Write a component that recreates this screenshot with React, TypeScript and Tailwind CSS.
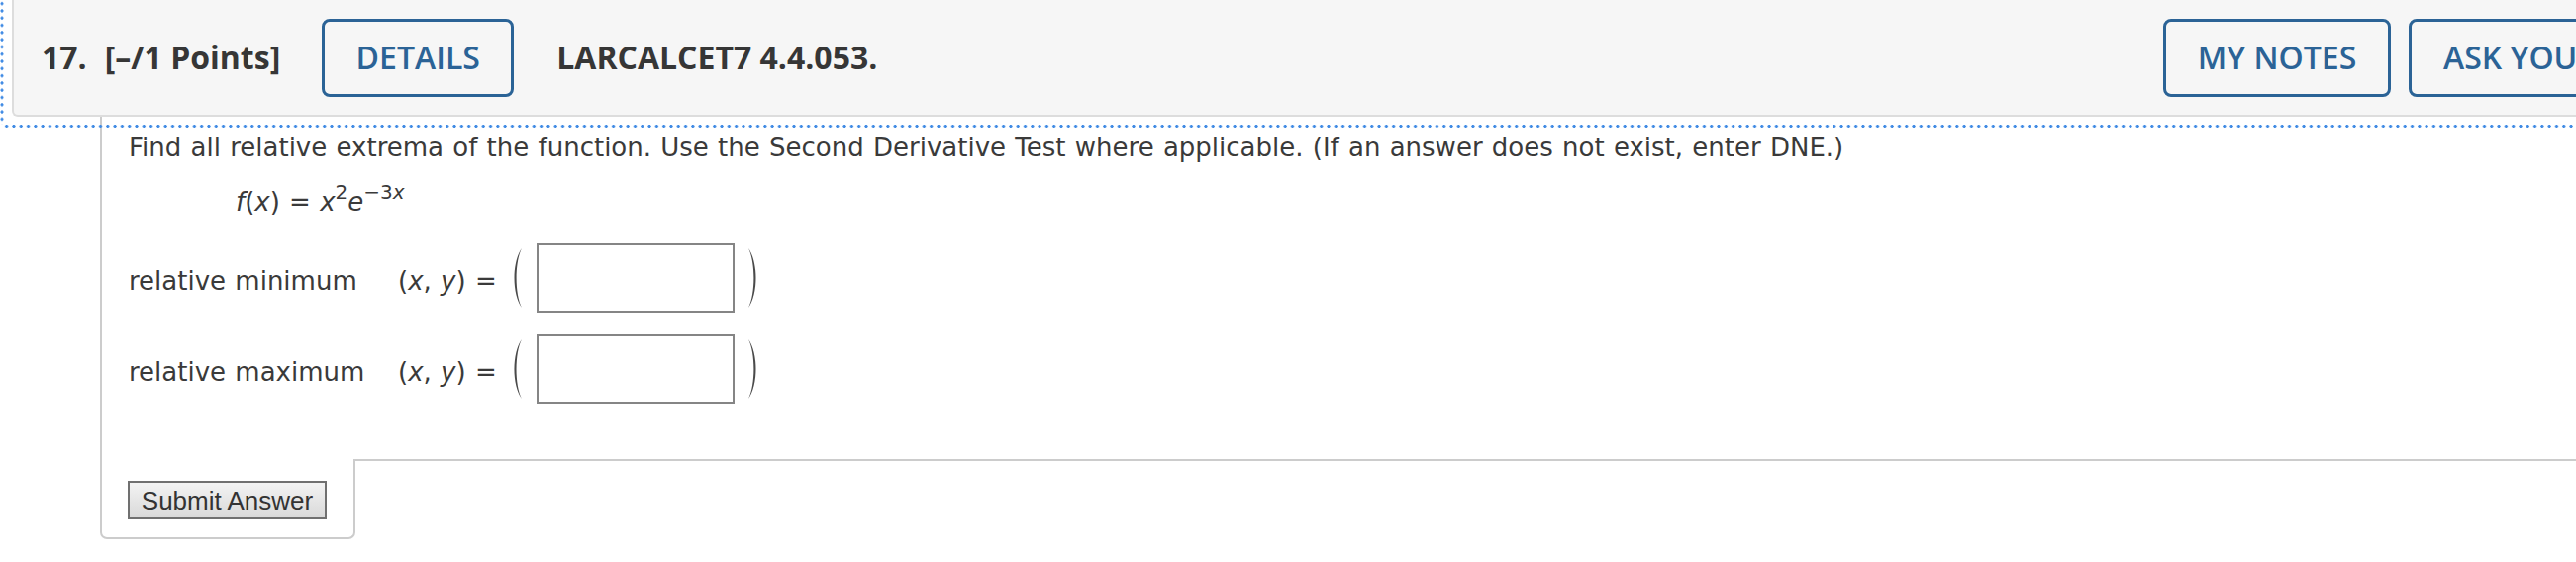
import React from "react";

const LeftParen = () => (
  <svg width="14" height="60" viewBox="0 0 14 60" className="block">
    <path d="M11 0 C1 14 1 46 11 60 C3.8 46 3.8 14 11 0 Z" fill="#4a4a4a" />
  </svg>
);

const RightParen = () => (
  <svg width="14" height="60" viewBox="0 0 14 60" className="block">
    <path d="M3 0 C13 14 13 46 3 60 C10.2 46 10.2 14 3 0 Z" fill="#4a4a4a" />
  </svg>
);

const Row = ({ label, className }: { label: string; className?: string }) => (
  <div className={"flex items-center h-[70px] " + (className ?? "")}>
    <span className="w-[272px] pt-[7px] leading-[39px] shrink-0">{label}</span>
    <span className="pt-[7px] leading-[39px] whitespace-pre">
      (<i>x</i>, <i>y</i>) =
    </span>
    <span className="ml-[14px]">
      <LeftParen />
    </span>
    <div className="ml-[12px] w-[200px] h-[70px] border-2 border-[#858585] bg-white shrink-0" />
    <span className="ml-[11px]">
      <RightParen />
    </span>
  </div>
);

const HeaderButton = ({ label, w }: { label: string; w: string }) => (
  <div
    className={
      "h-[79px] border-[3px] border-[#2b6396] rounded-[8px] flex items-center text-[#2b6396] font-semibold text-[32px] whitespace-nowrap shrink-0 " +
      w
    }
  >
    {label}
  </div>
);

export default function App() {
  return (
    <div className="w-[2602px] h-[568px] overflow-hidden bg-white">
      <div className="relative w-[2900px]">
        {/* focus outline overlay */}
        <div className="absolute left-0 top-0 w-full h-[129px] flex flex-col pointer-events-none">
          <div className="flex-1 flex">
            <div className="w-[4px] h-full bg-[radial-gradient(circle,#3f8ae4_1.3px,transparent_1.8px)] bg-[length:4px_7.3px]" />
          </div>
          <div className="h-[3px] ml-[3px] bg-[radial-gradient(circle,#3f8ae4_1.3px,transparent_1.8px)] bg-[length:7.3px_3px]" />
        </div>

        {/* header */}
        <div className="ml-[12px] w-[2860px] h-[118px] bg-[#f6f6f6] border-l-2 border-b-2 border-[#dddddd] rounded-bl-[6px] flex items-center pl-[28px] font-['Open_Sans',sans-serif] text-[#363636]">
          <div className="w-[2143px] flex items-center shrink-0">
            <span className="text-[32px] font-bold whitespace-nowrap">17.</span>
            <span className="ml-[18px] text-[32px] font-bold whitespace-nowrap">[–/1 Points]</span>
            <div className="ml-[42px]">
              <HeaderButton label="DETAILS" w="w-[194px] justify-center" />
            </div>
            <span className="ml-[43px] text-[32px] font-bold whitespace-nowrap">LARCALCET7 4.4.053.</span>
          </div>
          <div className="flex gap-[18px]">
            <HeaderButton label="MY NOTES" w="w-[230px] justify-center" />
            <HeaderButton label="ASK YOUR TEACHER" w="px-[32px]" />
          </div>
        </div>

        {/* content */}
        <div className="ml-[101px] font-['DejaVu_Sans',Verdana,sans-serif] text-[26px] text-[#3a3a3a] [word-spacing:1px]">
          <div className="border-l-2 border-[#cccccc] pl-[27px] pt-[12px] pb-[56px]">
            <p className="leading-[39px] whitespace-nowrap">
              Find all relative extrema of the function. Use the Second Derivative Test where applicable. (If an answer does not exist, enter DNE.)
            </p>
            <p className="mt-[16px] ml-[108px] leading-[39px] whitespace-pre">
              <i>f</i>(<i>x</i>) = <i>x</i>
              <span className="relative -top-[12px] text-[20px] leading-none">2</span>
              <i>e</i>
              <span className="relative -top-[12px] text-[20px] leading-none">
                −3<i>x</i>
              </span>
            </p>
            <Row label="relative minimum" className="mt-[22px]" />
            <Row label="relative maximum" className="mt-[22px]" />
          </div>
          <div className="flex">
            <div className="w-[258px] h-[81px] border-l-2 border-r-2 border-b-2 border-[#cccccc] rounded-b-[7px] pl-[26px] pt-[22px] shrink-0">
              <button className="w-[201px] h-[39px] border-2 border-[#707070] bg-linear-to-b from-[#f3f3f3] to-[#d9d9d9] text-[26px] leading-none text-[#333333] font-['Liberation_Sans',Arial,sans-serif] [word-spacing:0px] flex items-center justify-center">
                Submit Answer
              </button>
            </div>
            <div className="flex-1 border-t-2 border-[#cccccc]" />
          </div>
        </div>
      </div>
    </div>
  );
}
